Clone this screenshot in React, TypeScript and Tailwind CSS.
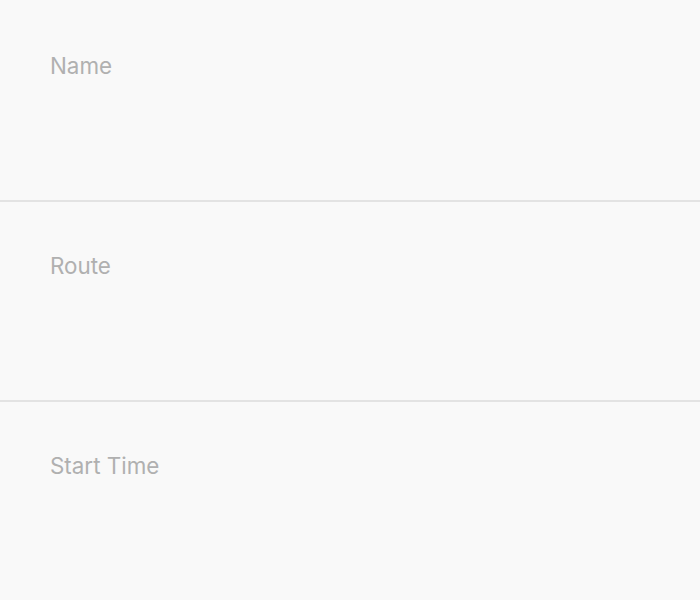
const fields = ["Name", "Route", "Start Time"]

export default function App() {
  return (
    <div className="min-h-[600px] bg-[#f9f9f9] font-['Inter',_'Liberation_Sans',_sans-serif]">
      {fields.map((f, i) => (
        <div
          key={f}
          className={
            i === 0
              ? "h-[200px] px-[50px] pt-[50px]"
              : "h-[200px] border-t-2 border-[#e3e3e3] px-[50px] pt-[48px]"
          }
        >
          <div className="text-[22.4px] leading-[32px] text-[#b0b0b0]">{f}</div>
        </div>
      ))}
    </div>
  )
}
